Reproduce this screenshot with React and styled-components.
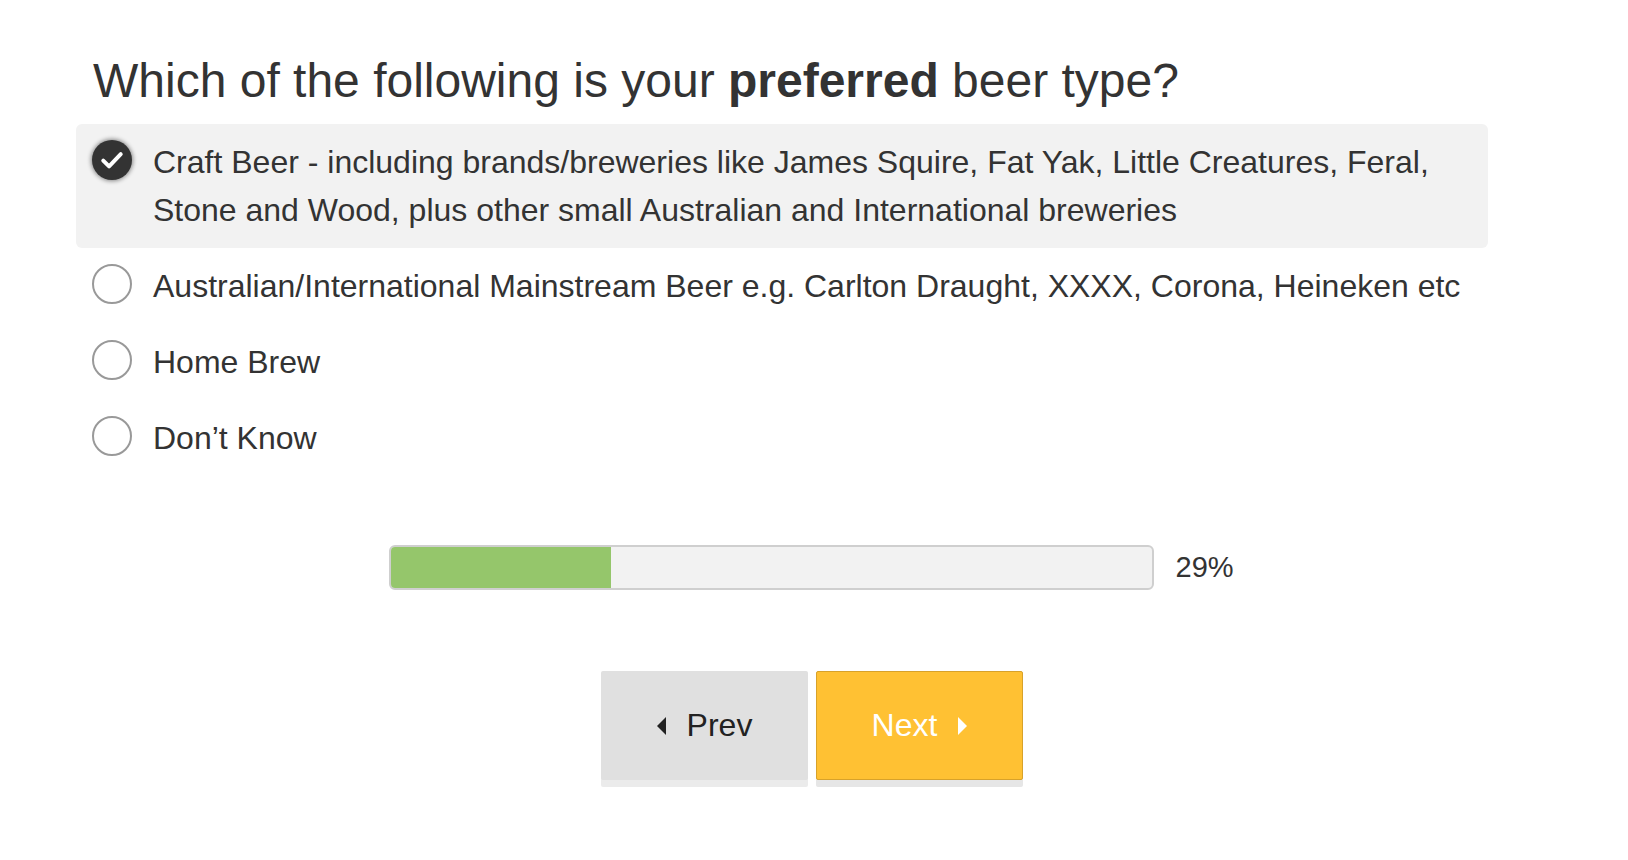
import React, { useState } from "react";
import styled, { createGlobalStyle } from "styled-components";

const GlobalStyle = createGlobalStyle`
  html, body {
    margin: 0;
    padding: 0;
    background: #fff;
  }
  body {
    font-family: "Liberation Sans", Arial, sans-serif;
    color: #333;
  }
`;

const Page = styled.div`
  width: 1628px;
  height: 860px;
  box-sizing: border-box;
  padding: 50px 0 0 76px;
  overflow: hidden;
`;

const Question = styled.h1`
  margin: 0 0 13px 17px;
  font-size: 48px;
  font-weight: 400;
  line-height: 61px;
  color: #333;

  strong {
    font-weight: 700;
  }
`;

const Options = styled.div`
  width: 1412px;
  display: flex;
  flex-direction: column;
`;

const Option = styled.label`
  display: flex;
  align-items: flex-start;
  gap: 21px;
  padding: 14px 16px;
  border-radius: 6px;
  background: ${(p) => (p.$checked ? "#f2f2f2" : "transparent")};
  font-size: 32px;
  line-height: 48px;
  color: #333;
  cursor: pointer;
`;

const Radio = styled.span`
  flex: 0 0 auto;
  width: 40px;
  height: 40px;
  margin-top: 2px;
  box-sizing: border-box;
  border-radius: 50%;
  border: ${(p) => (p.$checked ? "none" : "2px solid #999")};
  background: ${(p) => (p.$checked ? "#333" : "#fff")};
  box-shadow: ${(p) => (p.$checked ? "0 0 4px 1px rgba(0,0,0,0.45)" : "none")};
  display: flex;
  align-items: center;
  justify-content: center;
`;

const ProgressRow = styled.div`
  display: flex;
  align-items: center;
  justify-content: center;
  gap: 22px;
  margin: 69px 0 0 -76px;
  padding-right: 8px;
`;

const Track = styled.div`
  width: 765px;
  height: 45px;
  box-sizing: border-box;
  border: 2px solid #cfcfcf;
  border-radius: 6px;
  background: #f2f2f2;
  overflow: hidden;
`;

const Fill = styled.div`
  height: 100%;
  background: #95c66b;
`;

const Percent = styled.span`
  font-size: 29px;
  color: #333;
  width: 56px;
`;

const Buttons = styled.div`
  display: flex;
  justify-content: center;
  gap: 8px;
  margin: 81px 0 0 -76px;
  padding-right: 4px;
`;

const NavButton = styled.button`
  width: 207px;
  height: 109px;
  box-sizing: border-box;
  display: flex;
  align-items: center;
  justify-content: center;
  gap: 20px;
  border-radius: 2px;
  border: ${(p) => (p.$primary ? "1px solid #d8a22a" : "none")};
  background: ${(p) => (p.$primary ? "#ffc133" : "#e0e0e0")};
  color: ${(p) => (p.$primary ? "#fff" : "#222")};
  box-shadow: 0 7px 0 ${(p) => (p.$primary ? "#e6e6e6" : "#ebebeb")};
  font-family: "Liberation Sans", Arial, sans-serif;
  font-size: 32px;
  cursor: pointer;
`;

const Caret = styled.svg`
  width: 10px;
  height: 18px;
  fill: currentColor;
`;

const options = [
  "Craft Beer - including brands/breweries like James Squire, Fat Yak, Little Creatures, Feral, Stone and Wood, plus other small Australian and International breweries",
  "Australian/International Mainstream Beer e.g. Carlton Draught, XXXX, Corona, Heineken etc",
  "Home Brew",
  "Don\u2019t Know",
];

export default function App() {
  const [selected, setSelected] = useState(0);
  const progress = 29;

  return (
    <>
      <GlobalStyle />
      <Page>
        <Question>
          Which of the following is your <strong>preferred</strong> beer type?
        </Question>
        <Options>
          {options.map((text, i) => (
            <Option
              key={text}
              $checked={selected === i}
              onClick={() => setSelected(i)}
            >
              <Radio $checked={selected === i}>
                {selected === i && (
                  <svg width="28" height="28" viewBox="0 0 24 24">
                    <path
                      d="M4.5 12.5l5 5L19.5 7"
                      fill="none"
                      stroke="#fff"
                      strokeWidth="3.4"
                      strokeLinecap="round"
                      strokeLinejoin="round"
                    />
                  </svg>
                )}
              </Radio>
              <span>{text}</span>
            </Option>
          ))}
        </Options>
        <ProgressRow>
          <Track>
            <Fill style={{ width: `${progress}%` }} />
          </Track>
          <Percent>{progress}%</Percent>
        </ProgressRow>
        <Buttons>
          <NavButton>
            <Caret viewBox="0 0 10 18">
              <path d="M9 0v18L0 9z" />
            </Caret>
            Prev
          </NavButton>
          <NavButton $primary>
            Next
            <Caret viewBox="0 0 10 18">
              <path d="M1 0v18l9-9z" />
            </Caret>
          </NavButton>
        </Buttons>
      </Page>
    </>
  );
}
